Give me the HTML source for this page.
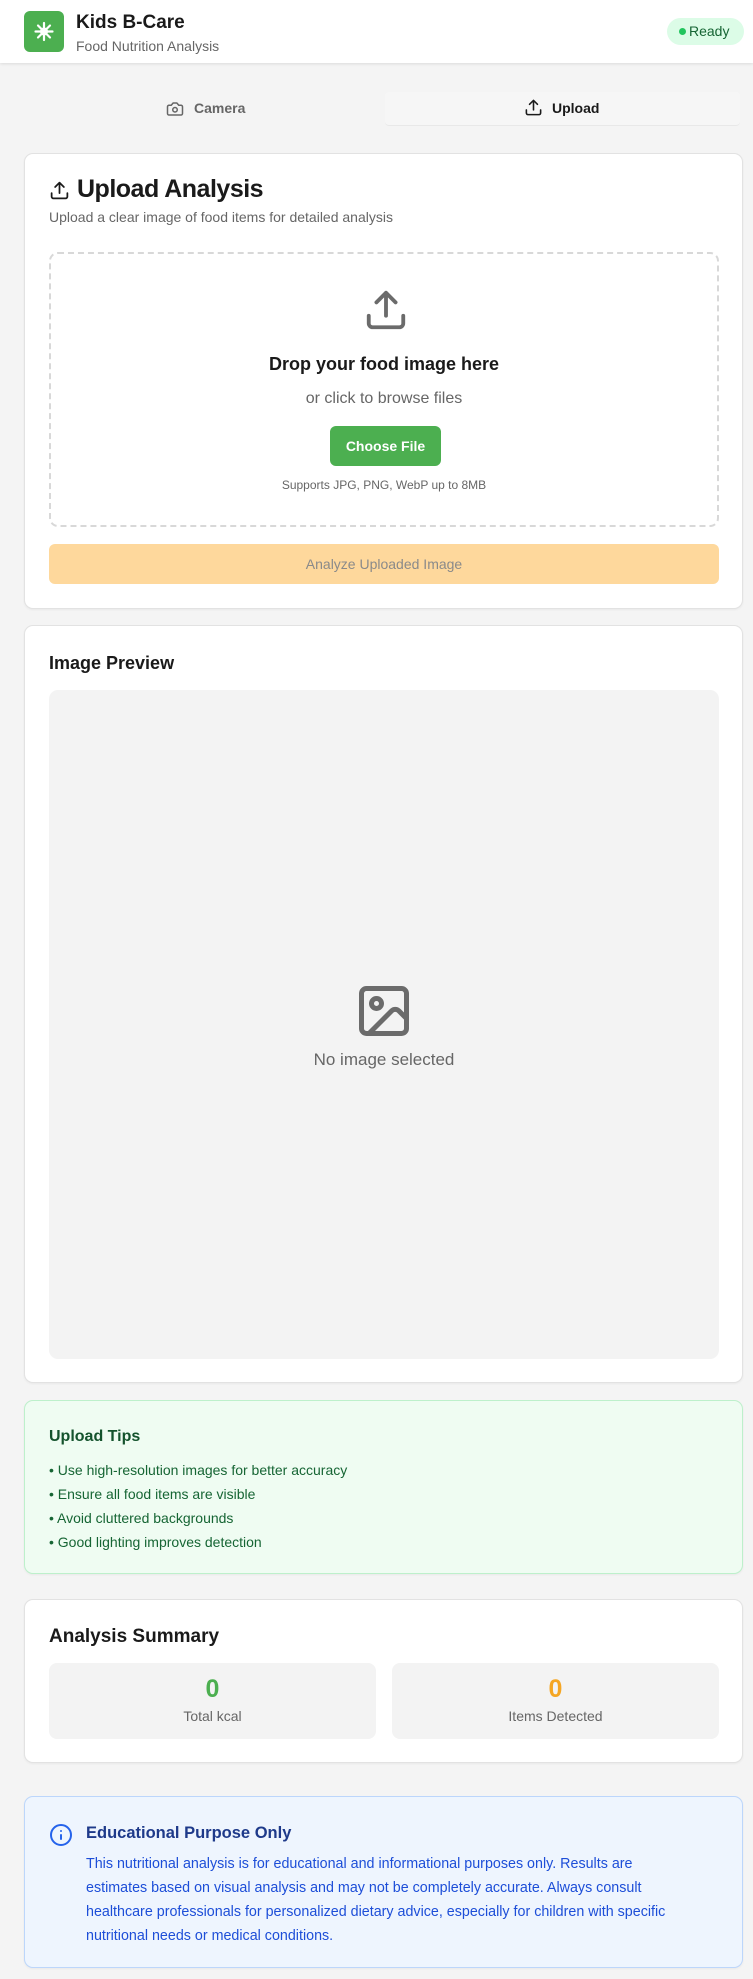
<!DOCTYPE html>
<html><head><meta charset="utf-8"><style>
*{box-sizing:border-box;margin:0;padding:0}
body{width:753px;height:1979px;background:#f4f4f4;font-family:"Liberation Sans",sans-serif;color:#1a1a1a;position:relative;overflow:hidden}
.abs{position:absolute}
.card{position:absolute;left:24px;width:719px;background:#fff;border:1px solid #e2e2e2;border-radius:9px;box-shadow:0 1px 2px rgba(0,0,0,.05)}
.c{text-align:center;left:0;right:0}
</style></head><body>
<div class="abs" style="left:0;top:0;width:753px;height:63px;background:#fff;box-shadow:0 1px 3px rgba(0,0,0,.1)"></div>
<div class="abs" style="left:24px;top:11px;width:40px;height:41px;background:#4caf50;border-radius:6px">
<svg width="40" height="41" viewBox="0 0 40 41"><g stroke="#fff" stroke-width="2.2" stroke-linecap="round"><line x1="20" y1="12" x2="20" y2="29"/><line x1="11.5" y1="20.5" x2="28.5" y2="20.5"/><line x1="14" y1="14.5" x2="26" y2="26.5"/><line x1="26" y1="14.5" x2="14" y2="26.5"/></g><circle cx="20" cy="20.5" r="4" fill="#fff"/></svg></div>
<div class="abs" style="left:76px;top:12px;font-size:19px;font-weight:bold">Kids B-Care</div>
<div class="abs" style="left:76px;top:38px;font-size:14px;color:#666">Food Nutrition Analysis</div>
<div class="abs" style="left:667px;top:18px;width:77px;height:27px;background:#dcfce7;border-radius:14px;font-size:14px;color:#166534;line-height:27px;padding-left:22px">Ready</div>
<div class="abs" style="left:679px;top:28px;width:7px;height:7px;border-radius:50%;background:#22c55e"></div>

<div class="abs" style="left:385px;top:92px;width:355px;height:34px;background:#f6f6f6;border-bottom:1px solid #e8e8e8;border-radius:4px"></div>
<svg class="abs" style="left:166px;top:100px" width="18" height="18" viewBox="0 0 24 24" fill="none" stroke="#666" stroke-width="2" stroke-linejoin="round"><path d="M14.5 4h-5L7 7H4a2 2 0 0 0-2 2v9a2 2 0 0 0 2 2h16a2 2 0 0 0 2-2V9a2 2 0 0 0-2-2h-3z"/><circle cx="12" cy="13" r="3"/></svg>
<div class="abs" style="left:194px;top:100px;font-size:14px;color:#666;font-weight:bold">Camera</div>
<svg class="abs" style="left:524px;top:98px" width="19" height="19" viewBox="0 0 24 24" fill="none" stroke="#1a1a1a" stroke-width="2" stroke-linecap="round" stroke-linejoin="round"><path d="M21 15v4a2 2 0 0 1-2 2H5a2 2 0 0 1-2-2v-4"/><path d="M17 8l-5-5-5 5M12 3v12"/></svg>
<div class="abs" style="left:552px;top:100px;font-size:14px;font-weight:bold">Upload</div>

<div class="card" style="top:153px;height:456px">
<svg class="abs" style="left:24px;top:26px" width="21" height="21" viewBox="0 0 24 24" fill="none" stroke="#1a1a1a" stroke-width="2" stroke-linecap="round" stroke-linejoin="round"><path d="M21 15v4a2 2 0 0 1-2 2H5a2 2 0 0 1-2-2v-4"/><path d="M17 8l-5-5-5 5M12 3v12"/></svg>
<div class="abs" style="left:52px;top:21px;font-size:25px;font-weight:bold;letter-spacing:-.5px">Upload Analysis</div>
<div class="abs" style="left:24px;top:55px;font-size:14px;color:#666">Upload a clear image of food items for detailed analysis</div>
<div class="abs" style="left:24px;top:98px;width:670px;height:275px;border:2px dashed #d8d8d8;border-radius:9px">
<svg class="abs" style="left:312px;top:33px" width="46" height="46" viewBox="0 0 24 24" fill="none" stroke="#6b6b6b" stroke-width="2" stroke-linecap="round" stroke-linejoin="round"><path d="M21 15v4a2 2 0 0 1-2 2H5a2 2 0 0 1-2-2v-4"/><path d="M17 8l-5-5-5 5M12 3v12"/></svg>
<div class="abs c" style="top:100px;font-size:18px;font-weight:bold">Drop your food image here</div>
<div class="abs c" style="top:136px;font-size:16px;color:#666">or click to browse files</div>
<div class="abs" style="left:279px;top:172px;width:111px;height:40px;background:#4caf50;border-radius:6px;color:#fff;font-size:14px;font-weight:bold;text-align:center;line-height:40px">Choose File</div>
<div class="abs c" style="top:224px;font-size:12px;color:#666">Supports JPG, PNG, WebP up to 8MB</div>
</div>
<div class="abs" style="left:24px;top:390px;width:670px;height:40px;background:#fed89c;border-radius:6px;color:#8a8a8a;font-size:14px;text-align:center;line-height:40px">Analyze Uploaded Image</div>
</div>

<div class="card" style="top:625px;height:758px">
<div class="abs" style="left:24px;top:27px;font-size:18px;font-weight:bold">Image Preview</div>
<div class="abs" style="left:24px;top:64px;width:670px;height:669px;background:#f3f3f3;border-radius:9px">
<svg class="abs" style="left:305px;top:291px" width="60" height="60" viewBox="0 0 24 24" fill="none" stroke="#6b6b6b" stroke-width="2" stroke-linecap="round" stroke-linejoin="round"><rect x="3" y="3" width="18" height="18" rx="2"/><circle cx="9" cy="9" r="2"/><path d="M21 15l-3.1-3.1a2 2 0 0 0-2.8 0L6 21"/></svg>
<div class="abs c" style="top:360px;font-size:17px;color:#666">No image selected</div>
</div>
</div>

<div class="card" style="top:1400px;height:174px;background:#effcf2;border-color:#bdf0cb">
<div class="abs" style="left:24px;top:27px;font-size:16px;font-weight:bold;color:#14532d">Upload Tips</div>
<div class="abs" style="left:24px;top:57px;font-size:14px;color:#166534;line-height:24px">• Use high-resolution images for better accuracy<br>• Ensure all food items are visible<br>• Avoid cluttered backgrounds<br>• Good lighting improves detection</div>
</div>

<div class="card" style="top:1599px;height:164px">
<div class="abs" style="left:24px;top:26px;font-size:19px;font-weight:bold">Analysis Summary</div>
<div class="abs" style="left:24px;top:63px;width:327px;height:76px;background:#f3f3f3;border-radius:8px">
<div class="abs c" style="top:12px;font-size:25px;font-weight:bold;color:#4caf50">0</div>
<div class="abs c" style="top:45px;font-size:14px;color:#666">Total kcal</div></div>
<div class="abs" style="left:367px;top:63px;width:327px;height:76px;background:#f3f3f3;border-radius:8px">
<div class="abs c" style="top:12px;font-size:25px;font-weight:bold;color:#f5a623">0</div>
<div class="abs c" style="top:45px;font-size:14px;color:#666">Items Detected</div></div>
</div>

<div class="card" style="top:1796px;height:172px;background:#eef5fe;border-color:#bcd6fb">
<svg class="abs" style="left:24px;top:26px" width="24" height="24" viewBox="0 0 24 24" fill="none" stroke="#2563eb" stroke-width="2" stroke-linecap="round"><circle cx="12" cy="12" r="10"/><path d="M12 16v-4M12 8h.01"/></svg>
<div class="abs" style="left:61px;top:27px;font-size:16.5px;font-weight:bold;color:#1e3a8a">Educational Purpose Only</div>
<div class="abs" style="left:61px;top:55px;width:640px;font-size:14.3px;color:#1d4ed8;line-height:24px">This nutritional analysis is for educational and informational purposes only. Results are<br>estimates based on visual analysis and may not be completely accurate. Always consult<br>healthcare professionals for personalized dietary advice, especially for children with specific<br>nutritional needs or medical conditions.</div>
</div>
</body></html>
